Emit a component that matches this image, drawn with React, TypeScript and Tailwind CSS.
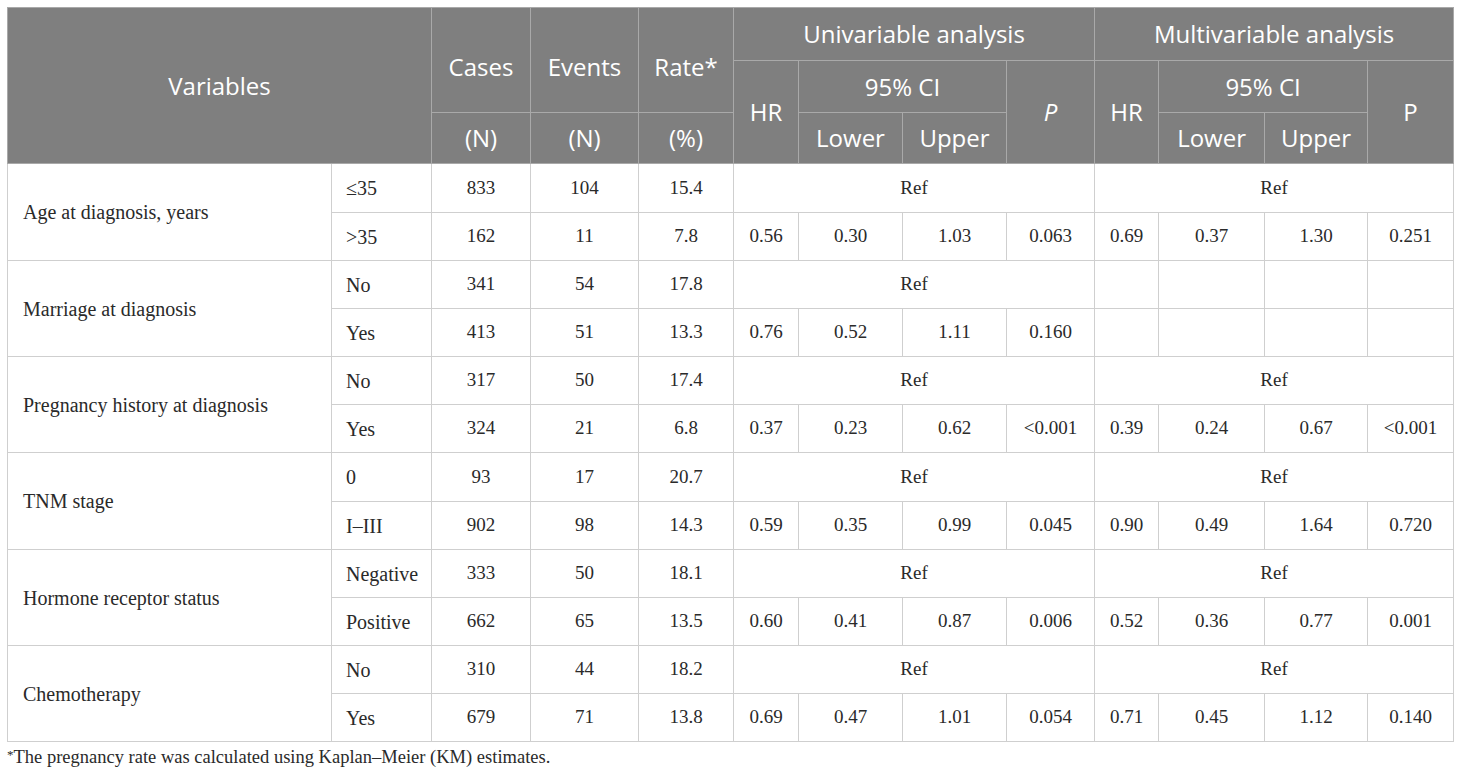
import React from 'react';

const groups: { name: string; rows: string[][]; uni: string[]; multi: string[] | 'empty' }[] = [
  { name: 'Age at diagnosis, years', rows: [['≤35', '833', '104', '15.4'], ['>35', '162', '11', '7.8']], uni: ['0.56', '0.30', '1.03', '0.063'], multi: ['0.69', '0.37', '1.30', '0.251'] },
  { name: 'Marriage at diagnosis', rows: [['No', '341', '54', '17.8'], ['Yes', '413', '51', '13.3']], uni: ['0.76', '0.52', '1.11', '0.160'], multi: 'empty' },
  { name: 'Pregnancy history at diagnosis', rows: [['No', '317', '50', '17.4'], ['Yes', '324', '21', '6.8']], uni: ['0.37', '0.23', '0.62', '<0.001'], multi: ['0.39', '0.24', '0.67', '<0.001'] },
  { name: 'TNM stage', rows: [['0', '93', '17', '20.7'], ['I–III', '902', '98', '14.3']], uni: ['0.59', '0.35', '0.99', '0.045'], multi: ['0.90', '0.49', '1.64', '0.720'] },
  { name: 'Hormone receptor status', rows: [['Negative', '333', '50', '18.1'], ['Positive', '662', '65', '13.5']], uni: ['0.60', '0.41', '0.87', '0.006'], multi: ['0.52', '0.36', '0.77', '0.001'] },
  { name: 'Chemotherapy', rows: [['No', '310', '44', '18.2'], ['Yes', '679', '71', '13.8']], uni: ['0.69', '0.47', '1.01', '0.054'], multi: ['0.71', '0.45', '1.12', '0.140'] },
];

const widths = [324, 100, 99, 108, 95, 65, 104, 104, 88, 64, 106, 103, 86];

const th = 'border border-[#a9a9a9] font-normal text-center align-middle px-1';
const td = 'border border-[#cfcfcf] text-center align-middle px-1 text-[19px]';
const tdLabel = 'border border-[#cfcfcf] text-left align-middle pl-[14px] text-[20px]';

export default function App() {
  return (
    <div className="bg-white w-[1460px] h-[780px] pt-[7px] pl-[7px]">
      <table
        className="table-fixed border-collapse w-[1446px] text-[#2a2a2a]"
        style={{ fontFamily: '"Liberation Serif", serif' }}
      >
        <colgroup>
          {widths.map((w, i) => (
            <col key={i} style={{ width: w }} />
          ))}
        </colgroup>
        <thead
          className="bg-[#7f7f7f] text-white text-[24px]"
          style={{ fontFamily: '"Open Sans", sans-serif' }}
        >
          <tr className="h-[53px]">
            <th colSpan={2} rowSpan={3} className={th}>Variables</th>
            <th rowSpan={2} className={`${th} pt-[14px]`}>Cases</th>
            <th rowSpan={2} className={`${th} pt-[14px]`}>Events</th>
            <th rowSpan={2} className={`${th} pt-[14px]`}>Rate*</th>
            <th colSpan={4} className={th}>Univariable analysis</th>
            <th colSpan={4} className={th}>Multivariable analysis</th>
          </tr>
          <tr className="h-[52px]">
            <th rowSpan={2} className={th}>HR</th>
            <th colSpan={2} className={th}>95% CI</th>
            <th rowSpan={2} className={`${th} italic`}>P</th>
            <th rowSpan={2} className={th}>HR</th>
            <th colSpan={2} className={th}>95% CI</th>
            <th rowSpan={2} className={th}>P</th>
          </tr>
          <tr className="h-[51px]">
            <th className={th}>(N)</th>
            <th className={th}>(N)</th>
            <th className={th}>(%)</th>
            <th className={th}>Lower</th>
            <th className={th}>Upper</th>
            <th className={th}>Lower</th>
            <th className={th}>Upper</th>
          </tr>
        </thead>
        <tbody>
          {groups.map((g, gi) => (
            <React.Fragment key={gi}>
              <tr className={gi % 3 === 0 ? 'h-[49px]' : 'h-[48px]'}>
                <td rowSpan={2} className="border border-[#cfcfcf] text-left align-middle pl-[15px] text-[20px]">
                  {g.name}
                </td>
                <td className={tdLabel}>{g.rows[0][0]}</td>
                <td className={td}>{g.rows[0][1]}</td>
                <td className={td}>{g.rows[0][2]}</td>
                <td className={td}>{g.rows[0][3]}</td>
                <td colSpan={4} className={td}>Ref</td>
                {g.multi === 'empty' ? (
                  <>
                    <td className={td}></td>
                    <td className={td}></td>
                    <td className={td}></td>
                    <td className={td}></td>
                  </>
                ) : (
                  <td colSpan={4} className={td}>Ref</td>
                )}
              </tr>
              <tr className="h-[48px]">
                <td className={tdLabel}>{g.rows[1][0]}</td>
                <td className={td}>{g.rows[1][1]}</td>
                <td className={td}>{g.rows[1][2]}</td>
                <td className={td}>{g.rows[1][3]}</td>
                {g.uni.map((v, i) => (
                  <td key={'u' + i} className={td}>{v}</td>
                ))}
                {g.multi === 'empty'
                  ? [0, 1, 2, 3].map((i) => <td key={'m' + i} className={td}></td>)
                  : g.multi.map((v, i) => (
                      <td key={'m' + i} className={td}>{v}</td>
                    ))}
              </tr>
            </React.Fragment>
          ))}
        </tbody>
      </table>
      <p
        className="mt-[6px] text-[18.5px] text-[#2a2a2a] leading-none"
        style={{ fontFamily: '"Liberation Serif", serif' }}
      >
        <span className="align-top text-[13px]">*</span>The pregnancy rate was calculated using Kaplan–Meier (KM) estimates.
      </p>
    </div>
  );
}
